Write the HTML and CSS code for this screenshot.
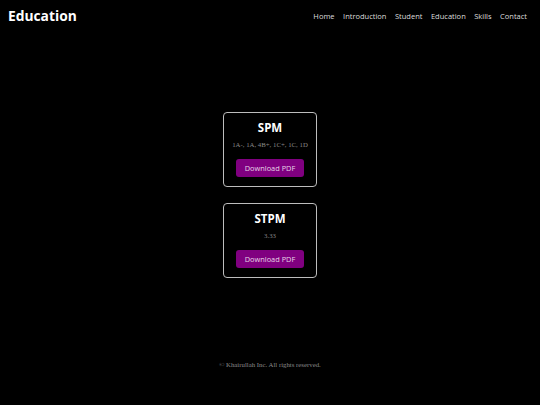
FILE: index.html
```html
<!DOCTYPE html>
<html lang="en">
<head>
<meta charset="utf-8">
<title>Education</title>
<link rel="stylesheet" href="styles.css">
</head>
<body>
<header class="site-header">
  <div class="brand">Education</div>
  <nav class="nav">
    <a href="#">Home</a>
    <a href="#">Introduction</a>
    <a href="#">Student</a>
    <a href="#">Education</a>
    <a href="#">Skills</a>
    <a href="#">Contact</a>
  </nav>
</header>
<main class="content">
  <section class="card">
    <h2 class="card-title">SPM</h2>
    <p class="card-text">1A-, 1A, 4B+, 1C+, 1C, 1D</p>
    <a class="btn" href="#">Download PDF</a>
  </section>
  <section class="card">
    <h2 class="card-title">STPM</h2>
    <p class="card-text">3.33</p>
    <a class="btn" href="#">Download PDF</a>
  </section>
</main>
<footer class="site-footer">© Khairullah Inc. All rights reserved.</footer>
</body>
</html>
```

FILE: styles.css
```css
html, body {
  margin: 0;
  padding: 0;
  background: #000;
}
body {
  font-family: "Open Sans", "DejaVu Sans", sans-serif;
  color: #fff;
  width: 540px;
  height: 405px;
  overflow: hidden;
}
.site-header {
  display: flex;
  align-items: center;
  justify-content: space-between;
  height: 32px;
  padding: 0 13px 0 8px;
}
.brand {
  font-weight: 700;
  font-size: 13.8px;
  line-height: 16px;
  color: #fff;
}
.nav {
  display: flex;
  gap: 8.5px;
}
.nav a {
  color: #ddd;
  text-decoration: none;
  font-size: 7.5px;
  line-height: 10px;
}
.content {
  display: flex;
  flex-direction: column;
  align-items: center;
  gap: 16px;
  padding: 80px 0 0;
}
.card {
  box-sizing: border-box;
  width: 94px;
  height: 75px;
  border: 1px solid #bdbdbd;
  border-radius: 4px;
  padding: 8px 0;
  display: flex;
  flex-direction: column;
  align-items: center;
}
.card-title {
  margin: 0;
  font-size: 11.5px;
  line-height: 14px;
  font-weight: 700;
  color: #fff;
}
.card-text {
  margin: 6px 0 0;
  font-family: "Liberation Serif", "Times New Roman", serif;
  font-size: 6.8px;
  line-height: 8px;
  color: #8a8a8a;
}
.btn {
  margin-top: 10px;
  box-sizing: border-box;
  width: 68px;
  height: 18px;
  display: flex;
  align-items: center;
  justify-content: center;
  background: #800080;
  border-radius: 3px;
  color: #e6d6e6;
  text-decoration: none;
  font-size: 7.4px;
}
.site-footer {
  margin-top: 80px;
  text-align: center;
  font-family: "Liberation Serif", "Times New Roman", serif;
  font-size: 6.8px;
  line-height: 14px;
  color: #8a8a8a;
}
```
